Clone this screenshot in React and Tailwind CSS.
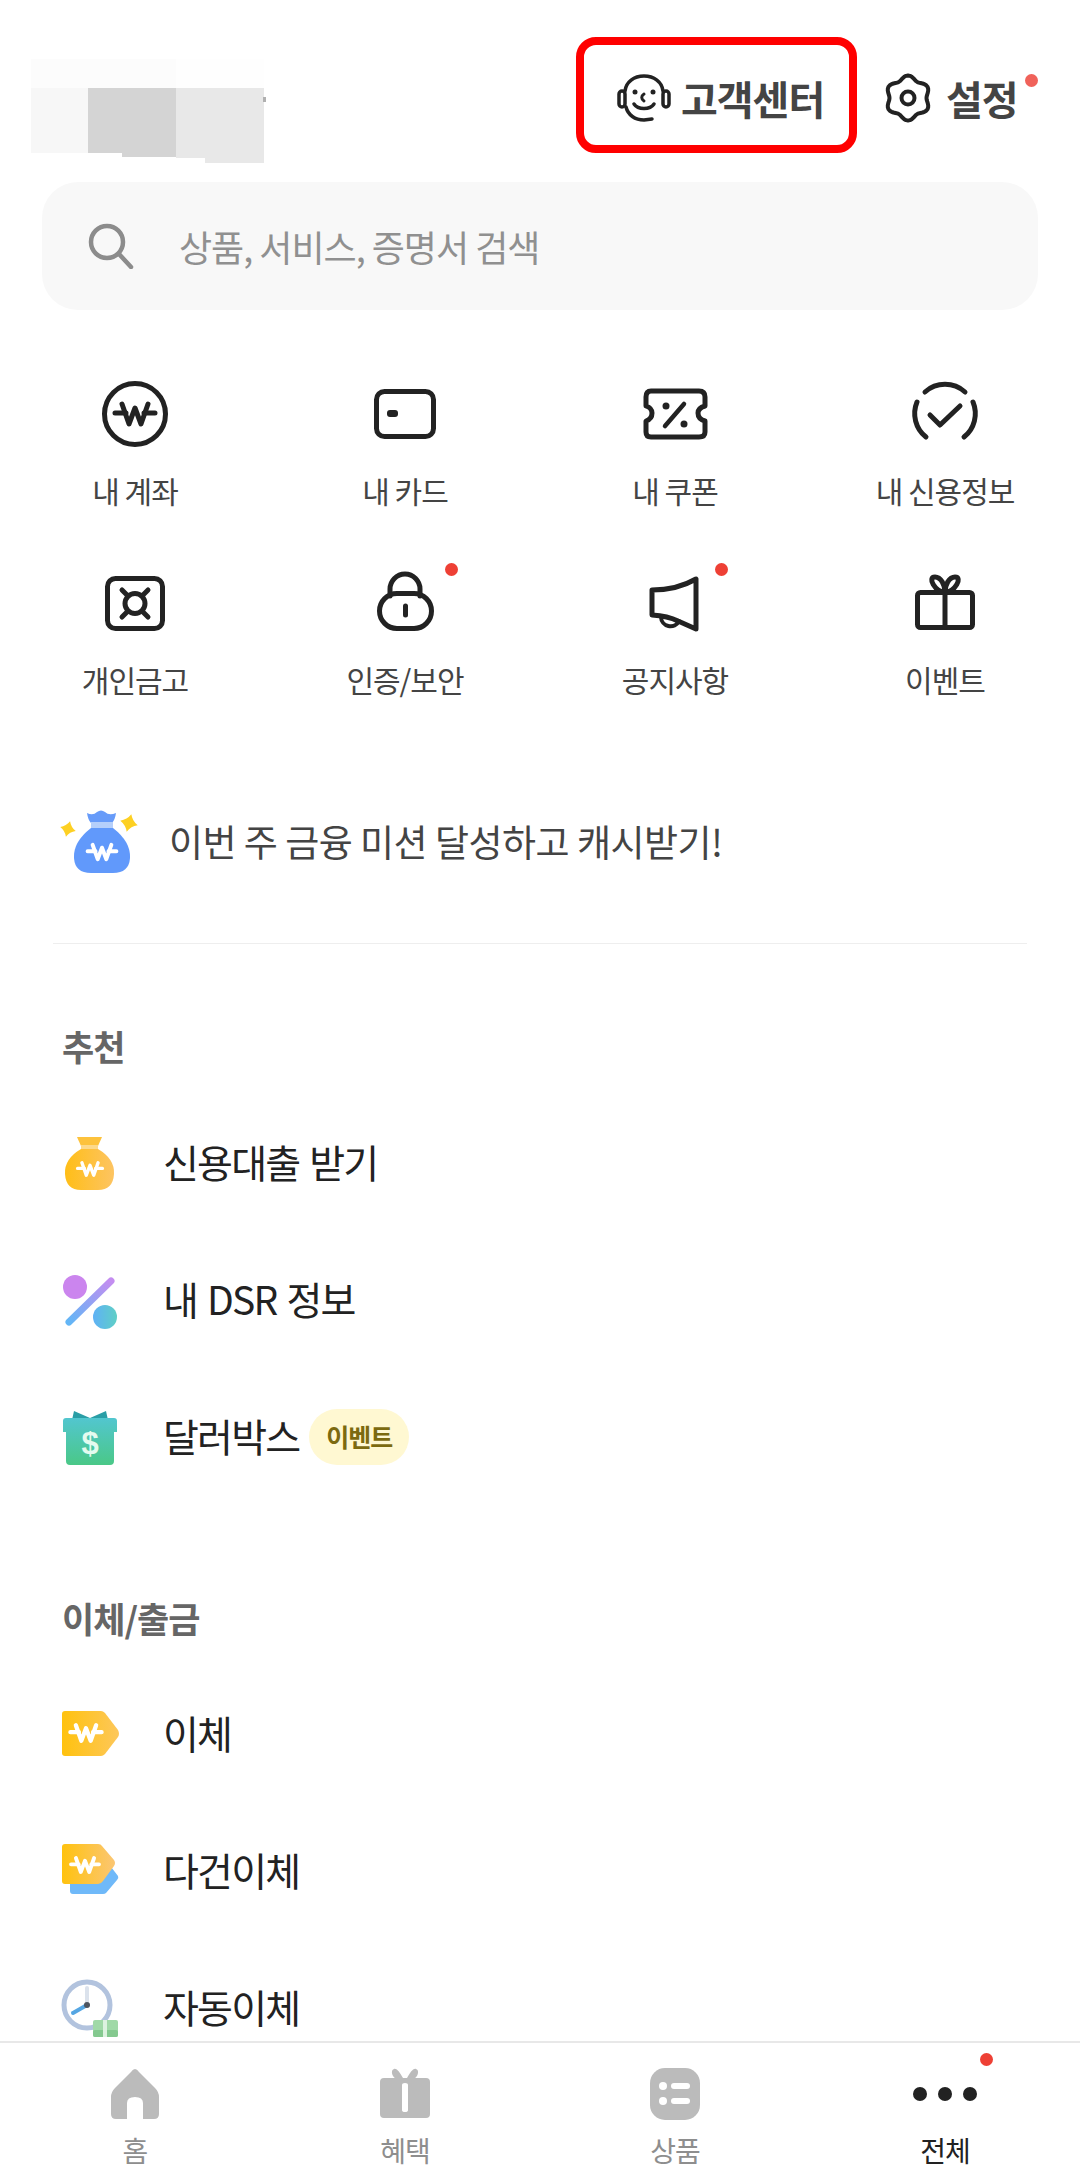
import React from 'react';

const FONT = "font-['Noto_Sans_CJK_KR','Noto_Sans',sans-serif]";

// the little won sign used on the bags and tags
const Won = ({ x, y, s = 1, color = '#fff', w = 5 }) => (
  <g transform={`translate(${x} ${y}) scale(${s})`} fill="none" stroke={color} strokeWidth={w} strokeLinecap="round" strokeLinejoin="round">
    <path d="M-13 -10 L-6 10 L0 -6 L6 10 L13 -10" />
    <path d="M-20 -1 H-9 M9 -1 H20" />
  </g>
);

const Dot = ({ className }) => (
  <span className={`absolute w-[13px] h-[13px] rounded-full bg-[#ee4035] ${className}`} />
);

const stroke = { fill: 'none', stroke: '#222', strokeWidth: 5, strokeLinecap: 'round', strokeLinejoin: 'round' };

const AccountIcon = () => (
  <svg width="80" height="80" viewBox="0 0 80 80">
    <circle cx="40" cy="40" r="30.500" {...stroke} />
    <Won x={40} y={40} s={1} color="#222" w={5} />
  </svg>
);
const CardIcon = () => (
  <svg width="80" height="80" viewBox="0 0 80 80">
    <rect x="11.500" y="17.500" width="57" height="45" rx="8" {...stroke} />
    <rect x="22" y="36" width="11" height="7" rx="3" fill="#222" />
  </svg>
);
const CouponIcon = () => (
  <svg width="80" height="80" viewBox="0 0 80 80">
    <path d="M16 17 H64 Q70 17 70 23 V32 Q63 34 63 39 Q63 45 70 47 V58 Q70 63 64 63 H16 Q11 63 11 58 V47 Q17 45 17 39 Q17 34 11 32 V23 Q11 17 16 17 Z" {...stroke} />
    <path d="M30 52 L49 30" {...stroke} strokeWidth="4.500" />
    <circle cx="31" cy="32" r="3.500" fill="#222" />
    <circle cx="49" cy="50" r="3.500" fill="#222" />
  </svg>
);
const CheckIcon = () => (
  <svg width="80" height="80" viewBox="0 0 80 80">
    <path d="M21 63 A30 30 0 0 1 12 28" {...stroke} />
    <path d="M20 18 A30 30 0 0 1 60 18" {...stroke} />
    <path d="M68 28 A30 30 0 0 1 59 63" {...stroke} />
    <path d="M25 41 L35 51 L55 32" {...stroke} />
  </svg>
);
const SafeIcon = () => (
  <svg width="80" height="80" viewBox="0 0 80 80">
    <rect x="12.500" y="15.500" width="55" height="50" rx="8" {...stroke} />
    <circle cx="40" cy="40.500" r="10" {...stroke} />
    <path d="M27 27 L32 32 M53 27 L48 32 M27 54 L32 49 M53 54 L48 49" {...stroke} />
  </svg>
);
const LockIcon = () => (
  <svg width="80" height="80" viewBox="0 0 80 80">
    <path d="M25 33 V26 A15 15 0 0 1 55 26 V33" {...stroke} />
    <rect x="14.500" y="30.500" width="52" height="35" rx="17.500" {...stroke} />
    <path d="M40.500 43 V52" {...stroke} />
  </svg>
);
const MegaphoneIcon = () => (
  <svg width="80" height="80" viewBox="0 0 80 80">
    <path d="M17 27 Q42 27 61 16 V66 L43 58 Q33 53 17 52 Z" {...stroke} />
    <path d="M26 54 A9.500 9.500 0 0 0 44 58" {...stroke} strokeWidth="4" />
  </svg>
);
const GiftIcon = () => (
  <svg width="80" height="80" viewBox="0 0 80 80">
    <rect x="12.500" y="29.500" width="55" height="35" rx="3" {...stroke} />
    <path d="M40 30 V64" {...stroke} />
    <path d="M40 29 C30 29 22 14 30 14 C36 14 40 22 40 29 C40 22 44 14 50 14 C58 14 50 29 40 29 Z" {...stroke} />
  </svg>
);

const Sparkle = ({ x, y, r }) => (
  <path
    transform={`translate(${x} ${y}) rotate(15)`}
    d={`M0 ${-r} Q${r * 0.3} ${-r * 0.3} ${r} 0 Q${r * 0.3} ${r * 0.3} 0 ${r} Q${-r * 0.3} ${r * 0.3} ${-r} 0 Q${-r * 0.3} ${-r * 0.3} 0 ${-r} Z`}
    fill="#fdd023"
  />
);

const BlueBagIcon = () => (
  <svg width="90" height="70" viewBox="0 0 90 70">
    <Sparkle x={13} y={23} r={8} />
    <Sparkle x={74} y={17} r={9} />
    <path d="M32 7 Q38 10 42 6 Q46 3 50 6 Q54 10 61 7 Q60 14 57 17 H36 Q33 14 32 7 Z" fill="#679bf9" />
    <rect x="36" y="16" width="22" height="6" fill="#b5cffb" />
    <path d="M36 22 H58 Q76 36 75 52 Q74 67 58 67 H36 Q20 67 19 52 Q18 36 36 22 Z" fill="#6199fb" />
    <Won x={47} y={46} s={0.72} w={5.500} />
  </svg>
);

const YellowBagIcon = () => (
  <svg width="60" height="60" viewBox="0 0 60 60">
    <defs>
      <linearGradient id="yb" x1="0" x2="1">
        <stop offset="0" stopColor="#ffbe17" />
        <stop offset="1" stopColor="#fdc462" />
      </linearGradient>
    </defs>
    <path d="M17 4 H42 L38 13 H21 Z" fill="#fdc23c" />
    <rect x="21" y="12" width="17" height="4" fill="#fdd98a" />
    <path d="M21 16 H38 Q55 26 54 41 Q53 57 38 57 H21 Q6 57 5 41 Q4 26 21 16 Z" fill="url(#yb)" />
    <Won x={30} y={36} s={0.62} w={5.500} />
  </svg>
);

const PercentIcon = () => (
  <svg width="60" height="60" viewBox="0 0 60 60">
    <defs>
      <linearGradient id="pb" x1="0" y1="1" x2="1" y2="0">
        <stop offset="0" stopColor="#63b6f6" />
        <stop offset="1" stopColor="#c48df0" />
      </linearGradient>
      <linearGradient id="pc" x1="0" x2="1">
        <stop offset="0" stopColor="#5fb1f6" />
        <stop offset="1" stopColor="#5fcfc6" />
      </linearGradient>
    </defs>
    <circle cx="15" cy="17" r="12" fill="#cb85ee" />
    <circle cx="45" cy="47" r="12" fill="url(#pc)" />
    <path d="M9 52 L51 11" stroke="url(#pb)" strokeWidth="7" strokeLinecap="round" />
  </svg>
);

const DollarGiftIcon = () => (
  <svg width="60" height="60" viewBox="0 0 60 60">
    <defs>
      <linearGradient id="dg" x1="0" y1="0" x2="0" y2="1">
        <stop offset="0" stopColor="#52c6cf" />
        <stop offset="1" stopColor="#4ac887" />
      </linearGradient>
    </defs>
    <path d="M14 4 L30 11 L46 4 L48 13 H12 Z" fill="#2a9ea6" />
    <path d="M3 14 Q3 11 6 11 H54 Q57 11 57 14 V25 H54 V54 Q54 58 50 58 H10 Q6 58 6 54 V25 H3 Z" fill="url(#dg)" />
    <text x="30" y="47" textAnchor="middle" fontSize="31" fontWeight="700" fill="#e4fbef" fontFamily="Liberation Sans, sans-serif">$</text>
  </svg>
);

const TagIcon = () => (
  <svg width="60" height="60" viewBox="0 0 60 60">
    <defs>
      <linearGradient id="tg" x1="0" x2="1">
        <stop offset="0" stopColor="#ffc20e" />
        <stop offset="1" stopColor="#fdc75a" />
      </linearGradient>
    </defs>
    <path d="M5 7 H41 Q43 7 45 9 L58 26 Q60 30 58 33 L45 50 Q43 52 41 52 H5 Q2 52 2 49 V10 Q2 7 5 7 Z" fill="url(#tg)" />
    <Won x={26} y={29} s={0.78} w={5.500} />
  </svg>
);

const MultiTagIcon = () => (
  <svg width="60" height="60" viewBox="0 0 60 60">
    <defs>
      <linearGradient id="mt" x1="0" x2="1">
        <stop offset="0" stopColor="#ffc20e" />
        <stop offset="1" stopColor="#fbc673" />
      </linearGradient>
    </defs>
    <path d="M12 22 H48 L58 35 Q59 37 57 39 L46 52 Q45 53 43 53 H13 Q10 53 10 50 V24 Z" fill="#6fb9f9" />
    <path d="M5 3 H38 Q41 3 42 5 L54 19 Q56 22 54 25 L43 40 Q41 43 38 43 H5 Q2 43 2 40 V6 Q2 3 5 3 Z" fill="url(#mt)" />
    <Won x={25} y={24} s={0.7} w={5.500} />
  </svg>
);

const ClockIcon = () => (
  <svg width="60" height="60" viewBox="0 0 60 60">
    <circle cx="27" cy="27" r="23" fill="none" stroke="#b2c3de" strokeWidth="5" />
    <path d="M27 27 V10" stroke="#dbe2ec" strokeWidth="4" strokeLinecap="round" />
    <path d="M27 27 L13 35" stroke="#55a6e3" strokeWidth="4" strokeLinecap="round" />
    <circle cx="27" cy="27" r="3" fill="#4d5560" />
    <rect x="33" y="42" width="25" height="17" rx="2" fill="#a0d9a7" />
    <rect x="33" y="52" width="25" height="7" rx="2" fill="#84c98f" />
    <rect x="43" y="42" width="4" height="17" fill="#dcf2df" />
  </svg>
);

const HeadsetFaceIcon = () => (
  <svg width="54" height="48" viewBox="0 0 54 48" fill="none" stroke="#222" strokeWidth="3.500" strokeLinecap="round" strokeLinejoin="round">
    <path d="M8 17 C9 8 17 2 27 2 C37 2 45 8 46 17" />
    <path d="M9 33 C11 41 18 46 27 46 L35 45" />
    <rect x="2" y="17" width="6" height="16" rx="3" />
    <rect x="46" y="17" width="6" height="16" rx="3" />
    <path d="M27 20 C24 22 24 25 27 27" strokeWidth="3" />
    <path d="M17 30 C21 36 33 36 37 30" />
    <circle cx="18" cy="18" r="2.500" fill="#222" stroke="none" />
    <circle cx="36" cy="18" r="2.500" fill="#222" stroke="none" />
  </svg>
);

// six soft lobes, sampled around the centre
const gearPath = Array.from({ length: 72 }, (_, i) => {
  const t = (i * 5 * Math.PI) / 180;
  const r = 20.5 - 2 * Math.cos(6 * t);
  return `${i === 0 ? 'M' : 'L'}${(24 + r * Math.cos(t)).toFixed(2)} ${(25 + r * Math.sin(t)).toFixed(2)}`;
}).join(' ') + ' Z';

const GearIcon = () => (
  <svg width="48" height="50" viewBox="0 0 48 50" fill="none" stroke="#222" strokeWidth="4" strokeLinejoin="round">
    <path d={gearPath} />
    <circle cx="24" cy="25" r="6.500" />
  </svg>
);

const SearchIcon = () => (
  <svg width="46" height="46" viewBox="0 0 46 46" fill="none" stroke="#8c8c8c" strokeWidth="4.500" strokeLinecap="round">
    <circle cx="19" cy="19" r="16" />
    <path d="M31 31 L43 44" />
  </svg>
);

const HomeIcon = () => (
  <svg width="50" height="52" viewBox="0 0 50 52">
    <path d="M25 1 Q27 1 29 4 L45 20 Q49 24 49 29 V46 Q49 51 44 51 H33 V35 Q33 29 25 29 Q17 29 17 35 V51 H6 Q1 51 1 46 V29 Q1 24 5 20 L21 4 Q23 1 25 1 Z" fill="#bbb" />
  </svg>
);

const NavGiftIcon = () => (
  <svg width="52" height="52" viewBox="0 0 52 52" fill="#bbb">
    <path d="M24 10 C21 5 18 0 15 1 C11 2 13 10 19 12 H33 C39 10 41 2 37 1 C34 0 31 5 28 10 Z" />
    <path fillRule="evenodd" d="M5 10 H47 Q51 10 51 14 V46 Q51 50 47 50 H5 Q1 50 1 46 V14 Q1 10 5 10 Z M23 17 Q23 15 26 15 Q29 15 29 17 V42 Q29 44 26 44 Q23 44 23 42 Z" />
  </svg>
);

const NavListIcon = () => (
  <svg width="52" height="54" viewBox="0 0 52 54">
    <rect x="1" y="1" width="50" height="52" rx="15" fill="#bbb" />
    <circle cx="14" cy="19" r="4" fill="#fff" />
    <circle cx="14" cy="34" r="4" fill="#fff" />
    <rect x="22" y="16" width="19" height="6" rx="3" fill="#fff" />
    <rect x="22" y="31" width="19" height="6" rx="3" fill="#fff" />
  </svg>
);

const quickMenus = [
  { label: '내 계좌', icon: AccountIcon },
  { label: '내 카드', icon: CardIcon },
  { label: '내 쿠폰', icon: CouponIcon },
  { label: '내 신용정보', icon: CheckIcon },
  { label: '개인금고', icon: SafeIcon },
  { label: '인증/보안', icon: LockIcon, dot: true },
  { label: '공지사항', icon: MegaphoneIcon, dot: true },
  { label: '이벤트', icon: GiftIcon },
];

const Row = ({ icon: Icon, label, badge }) => (
  <div className="h-[137px] flex items-center pl-[60px]">
    <div className="w-[60px] h-[60px] shrink-0">
      <Icon />
    </div>
    <span className="ml-[43px] -mt-[3px] text-[39px] leading-[50px] tracking-[-1.800px] [word-spacing:3px] text-[#222]">{label}</span>
    {badge && (
      <span className="ml-[10px] h-[56px] w-[100px] rounded-full bg-[#fff8d2] flex items-center justify-center text-[25px] font-bold tracking-[-1px] text-[#7c6a10]">
        {badge}
      </span>
    )}
  </div>
);

const SectionTitle = ({ children }) => (
  <h2 className="pl-[62px] h-[44px] leading-[44px] text-[35px] font-bold tracking-[-1px] text-[#666]">{children}</h2>
);

const NavItem = ({ icon, label, active, dot }) => (
  <div className="relative flex flex-col items-center">
    <div className="h-[54px] flex items-center justify-center">{icon}</div>
    <span className={`mt-[9px] text-[28px] leading-[40px] tracking-[-1px] ${active ? 'text-[#222]' : 'text-[#8e8e8e]'}`}>{label}</span>
    {dot && <Dot className="top-[-14px] left-[170px]" />}
  </div>
);

export default function App() {
  return (
    <div className={`w-[1080px] h-[2183px] bg-white flex flex-col overflow-hidden ${FONT}`}>
      <main className="flex-1 min-h-0 overflow-hidden">
        {/* ===== HEADER ===== */}
        <header className="h-[153px] pt-[37px] pr-[42px] flex items-start">
          {/* pixelated logo area */}
          <div className="ml-[31px] mt-[22px] flex items-start">
            <div className="w-[57px]">
              <div className="h-[29px] bg-[#fcfcfc]" />
              <div className="h-[65px] bg-[#f7f7f7]" />
            </div>
            <div className="w-[88px]">
              <div className="h-[29px] bg-[#fcfcfc]" />
              <div className="h-[65px] bg-[#d4d4d4]" />
              <div className="h-[4px] ml-[34px] bg-[#d4d4d4]" />
            </div>
            <div className="relative w-[88px]">
              <div className="h-[29px] bg-[#fefefe]" />
              <div className="h-[70px] bg-[#e8e8e8]" />
              <div className="h-[5px] ml-[29px] bg-[#e8e8e8]" />
              <span className="absolute top-[38px] left-[87px] w-[3px] h-[5px] bg-[#b0b0b0]" />
            </div>
          </div>
          <div className="ml-[312px] w-[281px] h-[116px] rounded-[20px] border-[8px] border-[#ff0000] flex items-center pl-[33px] pt-[6px] shrink-0">
            <HeadsetFaceIcon />
            <span className="ml-[10px] text-[40px] leading-[50px] font-bold tracking-[-1px] text-[#444] whitespace-nowrap">고객센터</span>
          </div>
          <div className="relative ml-[27px] h-[116px] flex items-center pt-[6px] shrink-0">
            <GearIcon />
            <span className="ml-[14px] text-[40px] leading-[50px] font-bold tracking-[-1px] text-[#444] whitespace-nowrap">설정</span>
            <Dot className="top-[37px] left-[141px] bg-[#f0625a]" />
          </div>
        </header>

        {/* ===== SEARCH ===== */}
        <div className="mt-[29px] mx-[42px] h-[128px] rounded-[36px] bg-[#f8f8f8] flex items-center pl-[46px]">
          <SearchIcon />
          <span className="ml-[45px] text-[36px] leading-[50px] tracking-[-1px] text-[#909090]">상품, 서비스, 증명서 검색</span>
        </div>

        {/* ===== QUICK MENU ===== */}
        <div className="mt-[64px] grid grid-cols-4 gap-y-[53px]">
          {quickMenus.map((menu) => (
            <div key={menu.label} className="flex flex-col items-center">
              <div className="relative w-[80px] h-[80px]">
                <menu.icon />
                {menu.dot && <Dot className="top-[0px] left-[80px]" />}
              </div>
              <span className="mt-[16px] text-[30px] leading-[40px] tracking-[-1px] text-[#444] whitespace-nowrap">{menu.label}</span>
            </div>
          ))}
        </div>

        {/* ===== PROMO ===== */}
        <div className="mt-[102px] h-[80px] flex items-center pl-[55px]">
          <BlueBagIcon />
          <span className="ml-[24px] text-[37px] leading-[50px] tracking-[-0.500px] text-[#444]">이번 주 금융 미션 달성하고 캐시받기!</span>
        </div>
        <div className="mt-[62px] mx-[53px] h-[1px] bg-[#eeeeee]" />

        {/* ===== LIST ===== */}
        <section className="mt-[80px]">
          <SectionTitle>추천</SectionTitle>
          <div className="mt-[26px]">
            <Row icon={YellowBagIcon} label="신용대출 받기" />
            <Row icon={PercentIcon} label="내 DSR 정보" />
            <Row icon={DollarGiftIcon} label="달러박스" badge="이벤트" />
          </div>
        </section>

        <section className="mt-[91px]">
          <SectionTitle>이체/출금</SectionTitle>
          <div className="mt-[25px]">
            <Row icon={TagIcon} label="이체" />
            <Row icon={MultiTagIcon} label="다건이체" />
            <Row icon={ClockIcon} label="자동이체" />
          </div>
        </section>
      </main>

      {/* ===== BOTTOM NAV ===== */}
      <nav className="h-[142px] shrink-0 border-t-2 border-[#e8e8e8] bg-white grid grid-cols-4 pt-[24px]">
        <NavItem icon={<HomeIcon />} label="홈" />
        <NavItem icon={<NavGiftIcon />} label="혜택" />
        <NavItem icon={<NavListIcon />} label="상품" />
        <NavItem
          icon={
            <div className="flex gap-[11px]">
              <span className="w-[14px] h-[14px] rounded-full bg-[#222]" />
              <span className="w-[14px] h-[14px] rounded-full bg-[#222]" />
              <span className="w-[14px] h-[14px] rounded-full bg-[#222]" />
            </div>
          }
          label="전체"
          active
          dot
        />
      </nav>
    </div>
  );
}
